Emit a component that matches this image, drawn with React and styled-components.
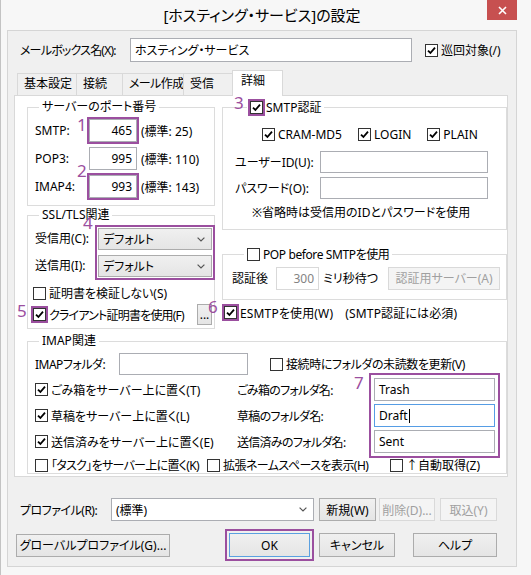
import React from 'react'
import styled, { createGlobalStyle } from 'styled-components'

const purple = '#9b4f9f'

const GlobalStyle = createGlobalStyle`
  html, body { margin: 0; padding: 0; background: #ffffff; }
  body {
    font-family: "Noto Sans", "Noto Sans CJK JP", sans-serif;
    font-size: 12px;
    color: #000;
    font-feature-settings: "palt";
  }
  *, *::before, *::after { box-sizing: border-box; }
`

const Window = styled.div`
  width: 531px;
  height: 575px;
  background: #f7f7f7;
  border-left: 1px solid #c3c3c3;
  padding: 0 14px 8px 6px;
  display: flex;
  flex-direction: column;
`

const TitleBar = styled.div`
  height: 30px;
  flex: none;
  display: grid;
  grid-template-columns: 1fr auto 1fr;
  align-items: center;
`

const Title = styled.div`
  grid-column: 2;
  font-size: 15px;
  white-space: nowrap;
  margin-top: -2px;
`

const CloseButton = styled.div`
  grid-column: 3;
  justify-self: end;
  align-self: start;
  width: 30px;
  height: 20px;
  background: #c75050;
  display: flex;
  align-items: center;
  justify-content: center;
`

const Client = styled.div`
  flex: 1;
  background: #f0f0f0;
  border: 1px solid #d5d5d5;
  padding: 7px 8px 0 6px;
  display: flex;
  flex-direction: column;
`

const MailboxRow = styled.div`
  display: flex;
  align-items: center;
  height: 24px;
  margin-left: 6px;
`

const FieldLabel = styled.span`
  width: ${p => p.$w}px;
  flex: none;
  white-space: nowrap;
  letter-spacing: ${p => p.$ls || 0}px;
`

const TextBox = styled.div`
  width: ${p => (p.$w ? `${p.$w}px` : 'auto')};
  height: ${p => p.$h || 23}px;
  flex: none;
  background: #fff;
  border: 1px solid ${p => (p.$focus ? '#569de5' : p.$disabled ? '#d9d9d9' : '#abadb3')};
  color: ${p => (p.$disabled ? '#838383' : '#000')};
  padding: 0 4px;
  display: flex;
  align-items: center;
  justify-content: ${p => (p.$right ? 'flex-end' : 'flex-start')};
  white-space: nowrap;
`

const Caret = styled.span`
  width: 1px;
  height: 14px;
  background: #000;
  margin-left: 1px;
`

const TabStrip = styled.div`
  display: flex;
  align-items: flex-end;
  height: 26px;
  margin-top: 8px;
  margin-bottom: -1px;
  padding-left: 4px;
  position: relative;
  z-index: 1;
`

const Tab = styled.div`
  width: ${p => p.$w}px;
  height: ${p => (p.$active ? 26 : 23)}px;
  margin-left: -1px;
  padding: ${p => (p.$active ? '2px 0 0 8px' : '2px 0 0 6px')};
  background: ${p => (p.$active ? '#fff' : '#f0f0f0')};
  border: 1px solid #d9d9d9;
  border-bottom: ${p => (p.$active ? 'none' : '1px solid #d9d9d9')};
  line-height: 16px;
  white-space: nowrap;
  letter-spacing: ${p => p.$ls || 0}px;
`

const Panel = styled.div`
  height: 382px;
  flex: none;
  background: #fff;
  border: 1px solid #d9d9d9;
  padding: 3px 6px 0 12px;
  display: grid;
  grid-template-columns: 188px 1fr;
  column-gap: 7px;
  align-content: start;
`

const Column = styled.div`
  display: flex;
  flex-direction: column;
  gap: ${p => p.$gap || 0}px;
`

const Group = styled.fieldset`
  margin: 0;
  min-width: 0;
  border: 1px solid #dcdcdc;
  padding: ${p => p.$pad};
  grid-column: ${p => (p.$wide ? '1 / -1' : 'auto')};
  margin-top: ${p => p.$mt || 0}px;
`

const Legend = styled.legend`
  margin-left: ${p => (p.$indent === undefined ? 4 : p.$indent)}px;
  padding: 0 3px;
  line-height: 16px;
  white-space: nowrap;
`

const PortRow = styled.div`
  display: grid;
  grid-template-columns: 50px 48px auto;
  column-gap: 4px;
  align-items: center;
  & + & { margin-top: 5px; }
`

const Mark = styled.span`
  position: relative;
  display: inline-flex;
  flex: none;
  outline: 2px solid ${purple};
  outline-offset: ${p => p.$offset || 0}px;
`

const MarkNum = styled.span`
  position: absolute;
  left: ${p => p.$x}px;
  top: ${p => p.$y}px;
  color: ${purple};
  font-size: 17px;
  line-height: 1;
  letter-spacing: 0;
  font-family: "Noto Sans", sans-serif;
`

const Box = styled.span`
  width: 13px;
  height: 13px;
  flex: none;
  border: 1px solid #333;
  background: #fff;
  display: inline-flex;
  align-items: center;
  justify-content: center;
`

const CheckLabel = styled.span`
  display: inline-flex;
  align-items: center;
  gap: 3px;
  height: 16px;
  white-space: nowrap;
  margin-left: ${p => p.$ml || 0}px;
  letter-spacing: ${p => p.$ls || 0}px;
  vertical-align: middle;
`

const SslGrid = styled.div`
  display: grid;
  grid-template-columns: 63px 114px;
`

const Stack = styled.div`
  display: flex;
  flex-direction: column;
  gap: ${p => p.$gap}px;
`

const StackLabel = styled.span`
  height: ${p => p.$h}px;
  line-height: ${p => p.$h}px;
  white-space: nowrap;
`

const Combo = styled.div`
  width: ${p => (p.$w ? `${p.$w}px` : '100%')};
  height: ${p => p.$h || 22}px;
  flex: none;
  border: 1px solid ${p => (p.$flat ? '#abadb3' : '#acacac')};
  background: ${p => (p.$flat ? '#fff' : 'linear-gradient(#f0f0f0, #e5e5e5)')};
  display: flex;
  align-items: center;
  justify-content: space-between;
  padding: 0 6px 0 4px;
  white-space: nowrap;
`

const CertRow = styled.div`
  display: flex;
  align-items: center;
  justify-content: space-between;
  margin-top: ${p => p.$mt || 0}px;
  margin-left: -2px;
`

const Button = styled.button`
  width: ${p => p.$w}px;
  height: ${p => p.$h || 23}px;
  flex: none;
  font: inherit;
  color: #000;
  padding: 0;
  background: linear-gradient(#f0f0f0, #e5e5e5);
  border: 1px solid ${p => (p.$default ? '#5aa0e0' : '#acacac')};
  margin-left: ${p => p.$ml || 0}px;
  white-space: nowrap;
  &:disabled {
    color: #a0a0a0;
    background: #f4f4f4;
    border-color: #d9d9d9;
  }
`

const AuthRow = styled.div`
  display: flex;
  gap: 16px;
  margin: 11px 0 0 27px;
`

const CredRow = styled.div`
  display: grid;
  grid-template-columns: 85px 168px;
  align-items: center;
  margin-top: ${p => p.$mt}px;
`

const Note = styled.div`
  margin: 6px 0 0 17px;
  line-height: 16px;
  white-space: nowrap;
`

const WaitRow = styled.div`
  display: flex;
  align-items: center;
  white-space: nowrap;
`

const Gap = styled.span`
  width: ${p => p.$w}px;
  flex: none;
`

const ImapTop = styled.div`
  display: flex;
  align-items: center;
`

const FolderGrid = styled.div`
  display: grid;
  grid-template-columns: 202px 137px 121px;
  margin-top: 3px;
`

const FolderCell = styled.div`
  height: 23px;
  display: flex;
  align-items: center;
  white-space: nowrap;
  letter-spacing: ${p => p.$ls || 0}px;
`

const OptionRow = styled.div`
  display: grid;
  grid-template-columns: 172px 183px auto;
  margin-top: 4px;
`

const ProfileRow = styled.div`
  display: flex;
  align-items: center;
  margin-top: 21px;
`

const ButtonRow = styled.div`
  display: flex;
  align-items: center;
  margin-top: 12px;
  padding-left: 2px;
`

const Tick = () => (
  <svg width="9" height="9" viewBox="0 0 9 9">
    <path d="M1 4.6 L3.4 7 L8 1.6" fill="none" stroke="#000" strokeWidth="1.8" />
  </svg>
)

const Chevron = () => (
  <svg width="8" height="5" viewBox="0 0 8 5">
    <path d="M0.6 0.6 L4 4 L7.4 0.6" fill="none" stroke="#555" strokeWidth="1.2" />
  </svg>
)

const CheckItem = ({ checked, mark, num, nx, ny, children, ...rest }) => {
  const box = <Box>{checked && <Tick />}</Box>
  return (
    <CheckLabel {...rest}>
      {mark ? (
        <Mark>
          {box}
          <MarkNum $x={nx} $y={ny}>{num}</MarkNum>
        </Mark>
      ) : box}
      <span>{children}</span>
    </CheckLabel>
  )
}

const App = () => {
  return (
    <>
      <GlobalStyle />
      <Window>
        <TitleBar>
          <Title>[ホスティング・サービス]の設定</Title>
          <CloseButton>
            <svg width="9" height="9" viewBox="0 0 9 9">
              <path d="M1 1 L8 8 M8 1 L1 8" stroke="#fff" strokeWidth="1.6" />
            </svg>
          </CloseButton>
        </TitleBar>

        <Client>
          <MailboxRow>
            <FieldLabel $w={110} $ls={-0.8}>メールボックス名(X):</FieldLabel>
            <TextBox $w={282} $h={24}>ホスティング・サービス</TextBox>
            <CheckItem checked $ml={13}>巡回対象(/)</CheckItem>
          </MailboxRow>

          <TabStrip>
            <Tab $w={60}>基本設定</Tab>
            <Tab $w={47}>接続</Tab>
            <Tab $w={62} $ls={-0.6}>メール作成</Tab>
            <Tab $w={50}>受信</Tab>
            <Tab $w={51} $active>詳細</Tab>
          </TabStrip>

          <Panel>
            <Column $gap={1}>
              <Group $pad="4px 4px 7px 7px">
                <Legend>サーバーのポート番号</Legend>
                <PortRow>
                  <span>SMTP:</span>
                  <Mark>
                    <TextBox $w={48} $right>465</TextBox>
                    <MarkNum $x={-12} $y={-3}>1</MarkNum>
                  </Mark>
                  <span>(標準: 25)</span>
                </PortRow>
                <PortRow>
                  <span>POP3:</span>
                  <TextBox $w={48} $right>995</TextBox>
                  <span>(標準: 110)</span>
                </PortRow>
                <PortRow>
                  <span>IMAP4:</span>
                  <Mark>
                    <TextBox $w={48} $right>993</TextBox>
                    <MarkNum $x={-12} $y={-13}>2</MarkNum>
                  </Mark>
                  <span>(標準: 143)</span>
                </PortRow>
              </Group>

              <Group $pad="5px 2px 3px 7px">
                <Legend>SSL/TLS関連</Legend>
                <SslGrid>
                  <Stack $gap={5}>
                    <StackLabel $h={22}>受信用(C):</StackLabel>
                    <StackLabel $h={22}>送信用(I):</StackLabel>
                  </Stack>
                  <Mark $offset={1}>
                    <Stack $gap={5} style={{ width: '100%' }}>
                      <Combo>デフォルト<Chevron /></Combo>
                      <Combo>デフォルト<Chevron /></Combo>
                    </Stack>
                    <MarkNum $x={-15} $y={-14}>4</MarkNum>
                  </Mark>
                </SslGrid>
                <CertRow $mt={8}>
                  <CheckItem>証明書を検証しない(S)</CheckItem>
                </CertRow>
                <CertRow $mt={3}>
                  <CheckItem checked mark num="5" nx={-16} ny={-6} $ls={-0.8}>
                    クライアント証明書を使用(F)
                  </CheckItem>
                  <Button $w={15} $h={21}>...</Button>
                </CertRow>
              </Group>
            </Column>

            <Column>
              <Group $pad="0 12px 8px 12px">
                <Legend $indent={12}>
                  <CheckItem checked mark num="3" nx={-16} ny={-7}>SMTP認証</CheckItem>
                </Legend>
                <AuthRow>
                  <CheckItem checked>CRAM-MD5</CheckItem>
                  <CheckItem checked>LOGIN</CheckItem>
                  <CheckItem checked>PLAIN</CheckItem>
                </AuthRow>
                <CredRow $mt={8}>
                  <span>ユーザーID(U):</span>
                  <TextBox $h={22} />
                </CredRow>
                <CredRow $mt={4}>
                  <span>パスワード(O):</span>
                  <TextBox $h={22} />
                </CredRow>
                <Note>※省略時は受信用のIDとパスワードを使用</Note>
              </Group>

              <Group $pad="4px 6px 9px 9px" $mt={16}>
                <Legend $indent={12}>
                  <CheckItem $ls={-0.4}>POP before SMTPを使用</CheckItem>
                </Legend>
                <WaitRow>
                  <span>認証後</span>
                  <Gap $w={8} />
                  <TextBox $w={43} $h={23} $right $disabled>300</TextBox>
                  <Gap $w={4} />
                  <span>ミリ秒待つ</span>
                  <Gap $w={10} />
                  <Button $w={112} disabled>認証用サーバー(A)</Button>
                </WaitRow>
              </Group>

              <CertRow $mt={5}>
                <CheckItem checked mark num="6" nx={-16} ny={-8} $ml={4} $ls={0.15}>
                  ESMTPを使用(W)　(SMTP認証には必須)
                </CheckItem>
              </CertRow>
            </Column>

            <Group $wide $mt={4} $pad="4px 5px 0 7px">
              <Legend>IMAP関連</Legend>
              <ImapTop>
                <FieldLabel $w={84} $ls={-0.5}>IMAPフォルダ:</FieldLabel>
                <TextBox $w={129} $h={22} />
                <CheckItem $ml={22} $ls={-0.4}>接続時にフォルダの未読数を更新(V)</CheckItem>
              </ImapTop>
              <FolderGrid>
                <Stack $gap={3}>
                  <FolderCell $ls={-0.8}><CheckItem checked>ごみ箱をサーバー上に置く(T)</CheckItem></FolderCell>
                  <FolderCell $ls={-0.8}><CheckItem checked>草稿をサーバー上に置く(L)</CheckItem></FolderCell>
                  <FolderCell $ls={-0.8}><CheckItem checked>送信済みをサーバー上に置く(E)</CheckItem></FolderCell>
                </Stack>
                <Stack $gap={3}>
                  <FolderCell $ls={-0.7}>ごみ箱のフォルダ名:</FolderCell>
                  <FolderCell $ls={-0.7}>草稿のフォルダ名:</FolderCell>
                  <FolderCell $ls={-0.7}>送信済みのフォルダ名:</FolderCell>
                </Stack>
                <Mark $offset={3}>
                  <Stack $gap={3} style={{ width: '100%' }}>
                    <TextBox>Trash</TextBox>
                    <TextBox $focus>Draft<Caret /></TextBox>
                    <TextBox>Sent</TextBox>
                  </Stack>
                  <MarkNum $x={-20} $y={-4}>7</MarkNum>
                </Mark>
              </FolderGrid>
              <OptionRow>
                <CheckItem $ls={-0.7}>「タスク」をサーバー上に置く(K)</CheckItem>
                <CheckItem $ls={-0.55}>拡張ネームスペースを表示(H)</CheckItem>
                <CheckItem>↑自動取得(Z)</CheckItem>
              </OptionRow>
            </Group>
          </Panel>

          <ProfileRow>
            <FieldLabel $w={91} $ls={-0.5} style={{ marginLeft: 6 }}>プロファイル(R):</FieldLabel>
            <Combo $w={203} $h={23} $flat>(標準)<Chevron /></Combo>
            <Button $w={57} $ml={5}>新規(W)</Button>
            <Button $w={56} $ml={3} disabled>削除(D)...</Button>
            <Button $w={57} $ml={5} disabled>取込(Y)</Button>
          </ProfileRow>

          <ButtonRow>
            <Button $w={154}>グローバルプロファイル(G)...</Button>
            <Mark $offset={2} style={{ marginLeft: 59 }}>
              <Button $w={81} $h={24} $default>OK</Button>
            </Mark>
            <Button $w={76} $h={24} $ml={9}>キャンセル</Button>
            <Button $w={84} $h={24} $ml={18}>ヘルプ</Button>
          </ButtonRow>
        </Client>
      </Window>
    </>
  )
}

export default App
